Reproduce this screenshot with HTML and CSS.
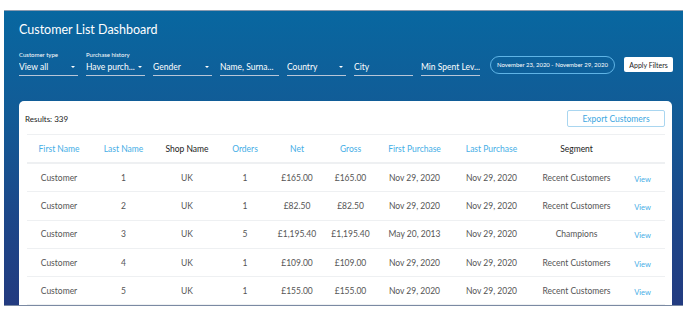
FILE: index.html
```html
<!DOCTYPE html>
<html lang="en">
<head>
  <meta charset="UTF-8">
  <title>Customer List Dashboard</title>
  <link rel="stylesheet" href="styles.css">
</head>
<body>
  <div class="panel">
    <h1>Customer List Dashboard</h1>

    <div class="filters">
      <div class="filter">
        <span class="label">Customer type</span>
        <div class="field select">View all</div>
      </div>
      <div class="filter">
        <span class="label">Purchase history</span>
        <div class="field select">Have purch...</div>
      </div>
      <div class="filter">
        <div class="field select">Gender</div>
      </div>
      <div class="filter">
        <div class="field">Name, Surna...</div>
      </div>
      <div class="filter">
        <div class="field select">Country</div>
      </div>
      <div class="filter">
        <div class="field">City</div>
      </div>
      <div class="filter">
        <div class="field">Min Spent Lev...</div>
      </div>
      <div class="date-range">November 23, 2020 - November 29, 2020</div>
      <button class="btn-apply">Apply Filters</button>
    </div>

    <div class="card">
      <div class="card-top">
        <span class="results">Results: 339</span>
        <button class="btn-export">Export Customers</button>
      </div>
      <table>
        <colgroup>
          <col style="width:64px"><col style="width:65px"><col style="width:62px"><col style="width:54px"><col style="width:50px">
          <col style="width:57px"><col style="width:71px"><col style="width:83px"><col style="width:87px"><col style="width:45px">
        </colgroup>
        <thead>
          <tr>
            <th class="sort">First Name</th>
            <th class="sort">Last Name</th>
            <th>Shop Name</th>
            <th class="sort">Orders</th>
            <th class="sort">Net</th>
            <th class="sort">Gross</th>
            <th class="sort">First Purchase</th>
            <th class="sort">Last Purchase</th>
            <th>Segment</th>
            <th></th>
          </tr>
        </thead>
        <tbody>
          <tr><td>Customer</td><td>1</td><td>UK</td><td>1</td><td>£165.00</td><td>£165.00</td><td>Nov 29, 2020</td><td>Nov 29, 2020</td><td>Recent Customers</td><td><a href="#" class="view">View</a></td></tr>
          <tr><td>Customer</td><td>2</td><td>UK</td><td>1</td><td>£82.50</td><td>£82.50</td><td>Nov 29, 2020</td><td>Nov 29, 2020</td><td>Recent Customers</td><td><a href="#" class="view">View</a></td></tr>
          <tr><td>Customer</td><td>3</td><td>UK</td><td>5</td><td>£1,195.40</td><td>£1,195.40</td><td>May 20, 2013</td><td>Nov 29, 2020</td><td>Champions</td><td><a href="#" class="view">View</a></td></tr>
          <tr><td>Customer</td><td>4</td><td>UK</td><td>1</td><td>£109.00</td><td>£109.00</td><td>Nov 29, 2020</td><td>Nov 29, 2020</td><td>Recent Customers</td><td><a href="#" class="view">View</a></td></tr>
          <tr><td>Customer</td><td>5</td><td>UK</td><td>1</td><td>£155.00</td><td>£155.00</td><td>Nov 29, 2020</td><td>Nov 29, 2020</td><td>Recent Customers</td><td><a href="#" class="view">View</a></td></tr>
        </tbody>
      </table>
    </div>
  </div>
</body>
</html>
```

FILE: styles.css
```css
body {
  margin: 0;
  background: #fff;
  font-family: Lato, "Noto Sans", sans-serif;
}
.panel {
  margin: 10px 0 0 4px;
  width: 679px;
  height: 296px;
  box-sizing: border-box;
  padding: 0 11px 0 15px;
  overflow: hidden;
  border-top: 1px solid #8a9bb0;
  border-bottom: 1px solid #7b8aa3;
  background: linear-gradient(180deg, #0867a0 0%, #125b96 35%, #1c4789 70%, #233b80 100%);
  color: #fff;
}
h1 {
  margin: 0;
  padding-top: 11px;
  font-size: 12.5px;
  line-height: 16px;
  font-weight: 400;
}
.filters {
  display: flex;
  align-items: flex-end;
  height: 25px;
  margin-top: 13px;
}
.filter {
  flex: 0 0 59px;
  margin-right: 8px;
  display: flex;
  flex-direction: column;
  min-width: 0;
}
.label {
  font-size: 6px;
  line-height: 9px;
  margin-bottom: 2px;
}
.field {
  position: relative;
  font-size: 8.5px;
  line-height: 12px;
  padding-bottom: 2px;
  border-bottom: 1px solid #b8c6d8;
  white-space: nowrap;
  overflow: hidden;
}
.select::after {
  content: "";
  position: absolute;
  right: 3px;
  top: 5px;
  border-left: 2.5px solid transparent;
  border-right: 2.5px solid transparent;
  border-top: 2.5px solid #fff;
}
.date-range {
  flex: 0 0 125px;
  margin-left: 2px;
  height: 18px;
  box-sizing: border-box;
  border: 1px solid #5fb4e6;
  border-radius: 9px;
  font-size: 6px;
  line-height: 16px;
  text-align: center;
  white-space: nowrap;
  align-self: flex-start;
  margin-top: 5px;
}
.btn-apply {
  flex: 0 0 49px;
  margin-left: 9px;
  height: 15px;
  padding: 0;
  border: none;
  border-radius: 2px;
  background: #fff;
  color: #222;
  font-family: inherit;
  font-size: 7px;
  align-self: flex-start;
  margin-top: 6px;
}
.card {
  margin-top: 25px;
  width: 653px;
  height: 220px;
  background: #fff;
  border-radius: 5px;
  color: #555;
  padding: 9px 7px 0 8px;
  box-sizing: border-box;
}
.card-top {
  display: flex;
  justify-content: space-between;
  align-items: center;
  height: 17px;
}
.results {
  margin-left: -2px;
  font-size: 8px;
  color: #222;
}
.btn-export {
  width: 98px;
  height: 17px;
  padding: 0;
  background: #fff;
  border: 1px solid #a9d6f0;
  border-radius: 2px;
  color: #3ea7df;
  font-family: inherit;
  font-size: 8.5px;
}
table {
  margin-top: 7px;
  width: 638px;
  table-layout: fixed;
  border-collapse: collapse;
}
th, td {
  padding: 0;
  text-align: center;
  white-space: nowrap;
  font-size: 8.5px;
  font-weight: 400;
}
th {
  height: 27px;
  color: #222;
  border-top: 1px solid #eef0f2;
  border-bottom: 2px solid #eef0f2;
}
th.sort {
  color: #45aee6;
}
td {
  height: 27.3px;
  color: #555;
  border-bottom: 1px solid #eef0f2;
}
.view {
  display: inline-block;
  padding-top: 3px;
  color: #45aee6;
  font-size: 7.5px;
  text-decoration: none;
}
```
